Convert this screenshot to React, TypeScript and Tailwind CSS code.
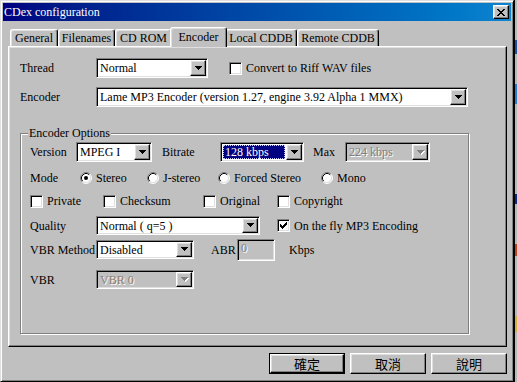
const raised =
  'border border-t-white border-l-white border-r-black border-b-black shadow-[inset_-1px_-1px_#808080,inset_1px_1px_#dfdfdf]'
const sunken =
  'border border-t-[#808080] border-l-[#808080] border-r-white border-b-white shadow-[inset_1px_1px_#000,inset_-1px_-1px_#dfdfdf]'
const grayText = 'text-[#808080] [text-shadow:1px_1px_0_#fff]'

function Arrow({ disabled }: { disabled?: boolean }) {
  const d = 'M0 0h7v1h-1v1h-1v1h-1v1h-1v-1h-1v-1h-1v-1h-1z'
  return (
    <svg width="8" height="5" viewBox="0 0 8 5" shapeRendering="crispEdges">
      {disabled && <path d={d} fill="#fff" transform="translate(1 1)" />}
      <path d={d} fill={disabled ? '#808080' : '#000'} />
    </svg>
  )
}

function Combo({
  value,
  className,
  disabled,
  selected,
}: {
  value: string
  className: string
  disabled?: boolean
  selected?: boolean
}) {
  return (
    <div className={`${sunken} ${disabled ? 'bg-[#c0c0c0]' : 'bg-white'} flex p-px shrink-0 ${className}`}>
      <div className="flex-1 flex items-center p-px overflow-hidden whitespace-nowrap">
        {selected ? (
          <span className="h-full flex-1 flex items-center pl-px bg-[#000080] text-white border border-dotted border-[#c8c8ff]">
            {value}
          </span>
        ) : (
          <span className={`pl-px ${disabled ? grayText : ''}`}>{value}</span>
        )}
      </div>
      <div className={`${raised} w-[16px] bg-[#c0c0c0] flex items-center justify-center pl-px`}>
        <Arrow disabled={disabled} />
      </div>
    </div>
  )
}

function Check({ label, checked, className = '' }: { label: string; checked?: boolean; className?: string }) {
  return (
    <div className={`flex items-center gap-[4px] shrink-0 ${className}`}>
      <div className={`${sunken} w-[13px] h-[13px] bg-white flex items-center justify-center`}>
        {checked && (
          <svg width="7" height="7" viewBox="0 0 7 7" shapeRendering="crispEdges">
            <path
              d="M6 0h1v1h-1zM5 1h2v1h-2zM0 2h1v1h-1zM4 2h3v1h-3zM0 3h2v1h-2zM3 3h3v1h-3zM0 4h5v1h-5zM1 5h3v1h-3zM2 6h1v1h-1z"
              fill="#000"
            />
          </svg>
        )}
      </div>
      <span className="whitespace-nowrap">{label}</span>
    </div>
  )
}

function Radio({ label, checked, className = '' }: { label: string; checked?: boolean; className?: string }) {
  return (
    <div className={`flex items-center gap-[4px] shrink-0 ${className}`}>
      <svg width="12" height="12" viewBox="0 0 12 12">
        <circle cx="6" cy="6" r="5" fill="#fff" />
        <path d="M2.11 9.89 A5.5 5.5 0 0 1 9.89 2.11" stroke="#808080" fill="none" />
        <path d="M2.82 9.18 A4.5 4.5 0 0 1 9.18 2.82" stroke="#000" fill="none" />
        <path d="M9.89 2.11 A5.5 5.5 0 0 1 2.11 9.89" stroke="#fff" fill="none" />
        <path d="M9.18 2.82 A4.5 4.5 0 0 1 2.82 9.18" stroke="#dfdfdf" fill="none" />
        {checked && <circle cx="6" cy="6" r="2" fill="#000" />}
      </svg>
      <span className="whitespace-nowrap">{label}</span>
    </div>
  )
}

function Tab({ label, className, active }: { label: string; className: string; active?: boolean }) {
  return (
    <div
      className={`${className} flex items-center justify-center whitespace-nowrap bg-[#c0c0c0] border-l border-t border-r border-l-white border-t-white border-r-black rounded-t-[3px] shadow-[inset_-1px_0_#808080,inset_1px_1px_#dfdfdf] ${
        active ? 'h-[20px] -mx-[2px] -mb-px relative z-10 pb-[2px]' : 'h-[17px]'
      }`}
    >
      {label}
    </div>
  )
}

function Button({ label, primary }: { label: string; primary?: boolean }) {
  const inner = (
    <div className={`${raised} h-full flex items-center justify-center font-['Noto_Sans_CJK_TC',sans-serif] text-[13px]`}>
      {label}
    </div>
  )
  return primary ? (
    <div className="w-[76px] h-[21px] border border-black">{inner}</div>
  ) : (
    <div className="w-[76px] h-[21px]">{inner}</div>
  )
}

export default function App() {
  return (
    <div className="w-[517px] h-[382px] flex bg-[#c0c0c0] overflow-hidden font-['Liberation_Serif',serif] text-[12px] leading-[14px] text-black">
      <div className="w-[514px] h-[382px] shrink-0 flex flex-col p-[2px] border border-t-[#dfdfdf] border-l-[#dfdfdf] border-r-black border-b-black shadow-[inset_1px_1px_#fff,inset_-1px_-1px_#808080]">
        <div className="h-[18px] shrink-0 flex items-center pl-[1px] pr-[2px] bg-linear-to-r from-[#000080] to-[#1084d0]">
          <span className="flex-1 text-white text-[12px]">CDex configuration</span>
          <div className={`${raised} w-[16px] h-[14px] bg-[#c0c0c0] flex items-center justify-center`}>
            <svg width="8" height="7" viewBox="0 0 8 7" shapeRendering="crispEdges">
              <path
                d="M0 0h2v1h-2zM6 0h2v1h-2zM1 1h2v1h-2zM5 1h2v1h-2zM2 2h4v1h-4zM3 3h2v1h-2zM2 4h4v1h-4zM1 5h2v1h-2zM5 5h2v1h-2zM0 6h2v1h-2zM6 6h2v1h-2z"
                fill="#000"
              />
            </svg>
          </div>
        </div>

        <div className="flex-1 flex flex-col pl-[5px] pr-[4px] pt-[6px]">
          <div className="h-[19px] flex items-end pl-[2px]">
            <Tab label="General" className="w-[48px]" />
            <Tab label="Filenames" className="w-[57px]" />
            <Tab label="CD ROM" className="w-[57px]" />
            <Tab label="Encoder" className="w-[57px]" active />
            <Tab label="Local CDDB" className="w-[72px]" />
            <Tab label="Remote CDDB" className="w-[82px]" />
          </div>

          <div className={`${raised} h-[301px] flex flex-col pl-[11px]`}>
            <div className="mt-[11px] h-[20px] flex items-center">
              <span className="w-[76px] shrink-0">Thread</span>
              <Combo value="Normal" className="w-[112px] h-[20px]" />
              <Check label="Convert to Riff WAV files" className="ml-[21px]" />
            </div>
            <div className="mt-[9px] h-[20px] flex items-center">
              <span className="w-[76px] shrink-0">Encoder</span>
              <Combo value="Lame MP3 Encoder (version 1.27, engine 3.92 Alpha 1 MMX)" className="w-[372px] h-[20px]" />
            </div>

            <div className="mt-[26px] w-[449px] h-[201px] relative border border-[#808080] shadow-[inset_1px_1px_#fff,1px_1px_#fff] flex flex-col pl-[9px]">
              <span className="absolute left-[7px] -top-[8px] px-px bg-[#c0c0c0]">Encoder Options</span>

              <div className="mt-[8px] h-[20px] flex items-center">
                <span className="w-[46px] shrink-0">Version</span>
                <Combo value="MPEG I" className="w-[76px] h-[20px]" />
                <span className="ml-[10px] w-[58px] shrink-0">Bitrate</span>
                <Combo value="128 kbps" className="w-[84px] h-[20px]" selected />
                <span className="ml-[9px] w-[32px] shrink-0">Max</span>
                <Combo value="224 kbps" className="w-[85px] h-[20px]" disabled />
              </div>

              <div className="mt-[8px] h-[16px] flex items-center">
                <span className="w-[50px] shrink-0">Mode</span>
                <Radio label="Stereo" checked className="w-[67px]" />
                <Radio label="J-stereo" className="w-[71px]" />
                <Radio label="Forced Stereo" className="w-[103px]" />
                <Radio label="Mono" />
              </div>

              <div className="mt-[7px] h-[16px] flex items-center">
                <Check label="Private" className="w-[73px]" />
                <Check label="Checksum" className="w-[100px]" />
                <Check label="Original" className="w-[74px]" />
                <Check label="Copyright" />
              </div>

              <div className="mt-[7px] h-[19px] flex items-center">
                <span className="w-[66px] shrink-0">Quality</span>
                <Combo value="Normal ( q=5 )" className="w-[164px] h-[19px]" />
                <Check label="On the fly MP3 Encoding" checked className="ml-[17px]" />
              </div>

              <div className="mt-[5px] h-[19px] flex items-center">
                <span className="w-[66px] shrink-0 whitespace-nowrap">VBR Method</span>
                <Combo value="Disabled" className="w-[98px] h-[19px]" />
                <span className="ml-[17px] w-[26px] shrink-0">ABR</span>
                <div className={`${sunken} w-[38px] h-[22px] shrink-0 bg-[#c0c0c0] pl-[3px] pt-px`}>
                  <span className={grayText}>0</span>
                </div>
                <span className="ml-[14px]">Kbps</span>
              </div>

              <div className="mt-[11px] h-[19px] flex items-center">
                <span className="w-[66px] shrink-0">VBR</span>
                <Combo value="VBR 0" className="w-[98px] h-[19px]" disabled />
              </div>
            </div>
          </div>

          <div className="mt-[6px] flex justify-end gap-[5px]">
            <Button label="確定" primary />
            <Button label="取消" />
            <Button label="說明" />
          </div>
        </div>
      </div>

      <div className="w-[3px] h-[382px] flex flex-col border-l border-black bg-[#b8b8b8]">
        <div className="h-[40px]" />
        <div className="h-[14px] bg-[#1a4fa0]" />
        <div className="h-[30px]" />
        <div className="h-[20px] bg-[#2a7ad0]" />
        <div className="h-[90px]" />
        <div className="h-[10px] bg-[#0a2a80]" />
        <div className="h-[40px]" />
        <div className="h-[12px] bg-[#c04020]" />
        <div className="h-[60px]" />
        <div className="h-[16px] bg-[#d0b040]" />
      </div>
    </div>
  )
}
